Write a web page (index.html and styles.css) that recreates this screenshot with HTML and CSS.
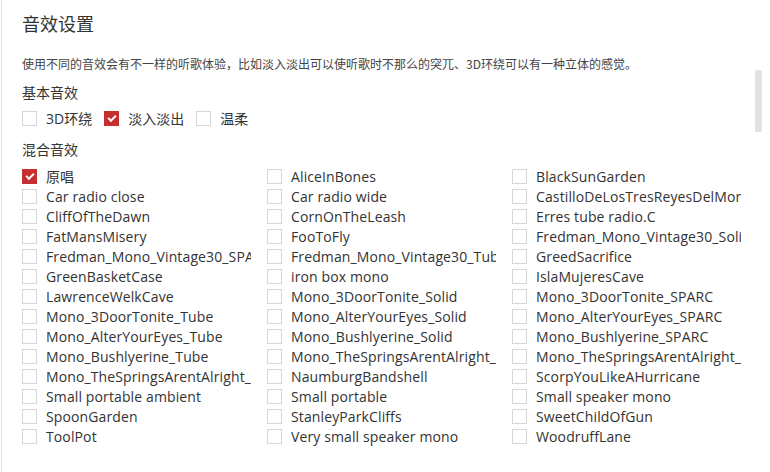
FILE: index.html
```html
<!DOCTYPE html>
<html lang="zh-CN">
<head>
<meta charset="utf-8">
<title>音效设置</title>
<link rel="stylesheet" href="styles.css">
</head>
<body>
<div class="page">
  <h1 class="title">音效设置</h1>
  <p class="desc">使用不同的音效会有不一样的听歌体验，比如淡入淡出可以使听歌时不那么的突兀、3D环绕可以有一种立体的感觉。</p>

  <h2 class="section">基本音效</h2>
  <div class="basic">
    <label class="opt"><span class="box"></span><span class="txt">3D环绕</span></label>
    <label class="opt"><span class="box on"></span><span class="txt">淡入淡出</span></label>
    <label class="opt"><span class="box"></span><span class="txt">温柔</span></label>
  </div>

  <h2 class="section mix">混合音效</h2>
  <div class="grid">
    <label class="item"><span class="box on"></span><span class="txt">原唱</span></label>
    <label class="item"><span class="box"></span><span class="txt">AliceInBones</span></label>
    <label class="item"><span class="box"></span><span class="txt">BlackSunGarden</span></label>
    <label class="item"><span class="box"></span><span class="txt">Car radio close</span></label>
    <label class="item"><span class="box"></span><span class="txt">Car radio wide</span></label>
    <label class="item"><span class="box"></span><span class="txt">CastilloDeLosTresReyesDelMorro</span></label>
    <label class="item"><span class="box"></span><span class="txt">CliffOfTheDawn</span></label>
    <label class="item"><span class="box"></span><span class="txt">CornOnTheLeash</span></label>
    <label class="item"><span class="box"></span><span class="txt">Erres tube radio.C</span></label>
    <label class="item"><span class="box"></span><span class="txt">FatMansMisery</span></label>
    <label class="item"><span class="box"></span><span class="txt">FooToFly</span></label>
    <label class="item"><span class="box"></span><span class="txt">Fredman_Mono_Vintage30_Solid</span></label>
    <label class="item"><span class="box"></span><span class="txt">Fredman_Mono_Vintage30_SPARC</span></label>
    <label class="item"><span class="box"></span><span class="txt">Fredman_Mono_Vintage30_Tube</span></label>
    <label class="item"><span class="box"></span><span class="txt">GreedSacrifice</span></label>
    <label class="item"><span class="box"></span><span class="txt">GreenBasketCase</span></label>
    <label class="item"><span class="box"></span><span class="txt">iron box mono</span></label>
    <label class="item"><span class="box"></span><span class="txt">IslaMujeresCave</span></label>
    <label class="item"><span class="box"></span><span class="txt">LawrenceWelkCave</span></label>
    <label class="item"><span class="box"></span><span class="txt">Mono_3DoorTonite_Solid</span></label>
    <label class="item"><span class="box"></span><span class="txt">Mono_3DoorTonite_SPARC</span></label>
    <label class="item"><span class="box"></span><span class="txt">Mono_3DoorTonite_Tube</span></label>
    <label class="item"><span class="box"></span><span class="txt">Mono_AlterYourEyes_Solid</span></label>
    <label class="item"><span class="box"></span><span class="txt">Mono_AlterYourEyes_SPARC</span></label>
    <label class="item"><span class="box"></span><span class="txt">Mono_AlterYourEyes_Tube</span></label>
    <label class="item"><span class="box"></span><span class="txt">Mono_Bushlyerine_Solid</span></label>
    <label class="item"><span class="box"></span><span class="txt">Mono_Bushlyerine_SPARC</span></label>
    <label class="item"><span class="box"></span><span class="txt">Mono_Bushlyerine_Tube</span></label>
    <label class="item"><span class="box"></span><span class="txt">Mono_TheSpringsArentAlright_Solid</span></label>
    <label class="item"><span class="box"></span><span class="txt">Mono_TheSpringsArentAlright_SPARC</span></label>
    <label class="item"><span class="box"></span><span class="txt">Mono_TheSpringsArentAlright_Tube</span></label>
    <label class="item"><span class="box"></span><span class="txt">NaumburgBandshell</span></label>
    <label class="item"><span class="box"></span><span class="txt">ScorpYouLikeAHurricane</span></label>
    <label class="item"><span class="box"></span><span class="txt">Small portable ambient</span></label>
    <label class="item"><span class="box"></span><span class="txt">Small portable</span></label>
    <label class="item"><span class="box"></span><span class="txt">Small speaker mono</span></label>
    <label class="item"><span class="box"></span><span class="txt">SpoonGarden</span></label>
    <label class="item"><span class="box"></span><span class="txt">StanleyParkCliffs</span></label>
    <label class="item"><span class="box"></span><span class="txt">SweetChildOfGun</span></label>
    <label class="item"><span class="box"></span><span class="txt">ToolPot</span></label>
    <label class="item"><span class="box"></span><span class="txt">Very small speaker mono</span></label>
    <label class="item"><span class="box"></span><span class="txt">WoodruffLane</span></label>
  </div>
  <div class="thumb"></div>
</div>
</body>
</html>
```

FILE: styles.css
```css
html, body {
  margin: 0;
  padding: 0;
  background: #fff;
}
body {
  font-family: "Open Sans", "Noto Sans CJK SC", sans-serif;
  color: #333;
  width: 770px;
  height: 472px;
  overflow: hidden;
}
.page {
  position: relative;
  margin-left: 1px;
  border-left: 1px solid #e1e1e1;
  height: 472px;
  box-sizing: border-box;
  padding: 11px 0 0 20px;
}
.title {
  margin: 0;
  font-size: 18px;
  line-height: 24px;
  font-weight: normal;
  font-family: "Noto Sans CJK SC", sans-serif;
  color: #333;
}
.desc {
  margin: 21px 0 0;
  font-size: 12px;
  line-height: 16px;
  font-family: "Noto Sans CJK SC", sans-serif;
  color: #444;
}
.section {
  margin: 10px 0 0;
  font-size: 14px;
  line-height: 20px;
  font-weight: normal;
  font-family: "Noto Sans CJK SC", sans-serif;
  color: #333;
}
.section.mix {
  margin-top: 11px;
}
.basic {
  display: flex;
  margin-top: 6px;
  gap: 12px;
}
.opt, .item {
  display: flex;
  align-items: center;
  height: 20px;
  font-size: 14px;
  color: #333;
}
.box {
  flex: none;
  width: 15px;
  height: 15px;
  box-sizing: border-box;
  border: 1px solid #d6d6d6;
  background: #fff;
  margin-right: 9px;
  position: relative;
}
.box.on {
  background: #c62f2f;
  border-color: #c62f2f;
}
.box.on::after {
  content: "";
  position: absolute;
  left: 3px;
  top: 3px;
  width: 6px;
  height: 3px;
  border-left: 2px solid #fff;
  border-bottom: 2px solid #fff;
  transform: rotate(-45deg);
}
.grid {
  margin-top: 7px;
  display: grid;
  grid-template-columns: repeat(3, 245px);
  grid-auto-rows: 20px;
}
.item .txt {
  width: 205px;
  overflow: hidden;
  white-space: nowrap;
  letter-spacing: 0.12px;
}
.thumb {
  position: absolute;
  left: 753px;
  top: 70px;
  width: 7px;
  height: 62px;
  background: #e2e2e2;
  border-radius: 2px;
}
```
